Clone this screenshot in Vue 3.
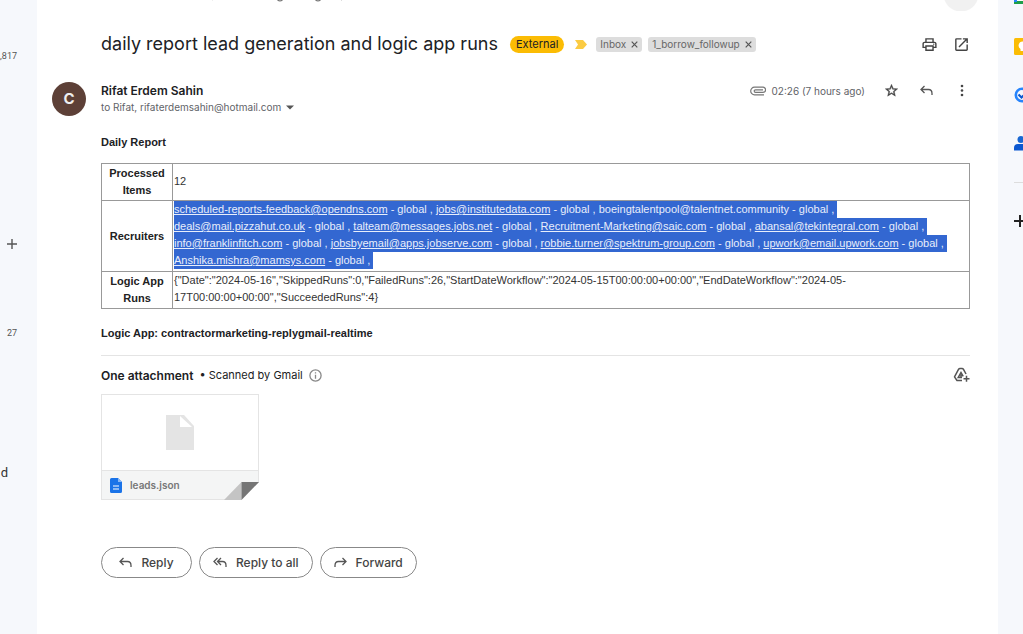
<script setup>
const labels = ['Inbox', '1_borrow_followup']

const recruiterLines = [
  [
    { address: 'scheduled-reports-feedback@opendns.com', link: true },
    { address: 'jobs@institutedata.com', link: true },
    { address: 'boeingtalentpool@talentnet.community', link: false },
  ],
  [
    { address: 'deals@mail.pizzahut.co.uk', link: true },
    { address: 'talteam@messages.jobs.net', link: true },
    { address: 'Recruitment-Marketing@saic.com', link: true },
    { address: 'abansal@tekintegral.com', link: true },
  ],
  [
    { address: 'info@franklinfitch.com', link: true },
    { address: 'jobsbyemail@apps.jobserve.com', link: true },
    { address: 'robbie.turner@spektrum-group.com', link: true },
    { address: 'upwork@email.upwork.com', link: true },
  ],
  [{ address: 'Anshika.mishra@mamsys.com', link: true }],
]
</script>

<template>
  <div class="shell">
    <aside class="rail-left">
      <span class="count first">,817</span>
      <button class="add" aria-label="Create label">
        <svg width="12" height="12" viewBox="0 0 12 12"><path d="M6 1v10M1 6h10" stroke="#555" stroke-width="1.4" /></svg>
      </button>
      <span class="count second">27</span>
      <span class="tail">d</span>
    </aside>

    <main class="mail">
      <div class="toolbar">
        <svg class="remnant" width="132" height="3" viewBox="0 0 132 3" fill="none" stroke="#777">
          <path d="M0 0v1M129.500 0v1" stroke="#ddd" />
          <path d="M65.500 0q2.500 1.600 5 0M103.500 0q2.500 1.600 5 0" stroke-width="1.200" />
        </svg>
        <span class="round"></span>
      </div>

      <header class="subject">
        <h1>daily report lead generation and logic app runs</h1>
        <span class="external">External</span>
        <svg class="important" width="12" height="9" viewBox="0 0 12 9"><path d="M0 0h8l4 4.500L8 9H0l3-4.500z" fill="#fbcb43" /></svg>
        <ul class="labels">
          <li v-for="label in labels" :key="label">
            {{ label }}
            <button :aria-label="'Remove label ' + label">
              <svg width="7" height="7" viewBox="0 0 7 7"><path d="M.7.7l5.600 5.600M6.300.7L.7 6.300" stroke="#555" stroke-width="1.200" /></svg>
            </button>
          </li>
        </ul>
        <div class="tools">
          <button aria-label="Print all">
            <svg width="17" height="17" viewBox="0 0 24 24" fill="#444"><path d="M19 8h-1V3H6v5H5c-1.660 0-3 1.340-3 3v6h4v4h12v-4h4v-6c0-1.660-1.340-3-3-3zM8 5h8v3H8V5zm8 14H8v-4h8v4zm2-4v-2H6v2H4v-4c0-.55.45-1 1-1h14c.55 0 1 .45 1 1v4h-2z" /><circle cx="18" cy="11.500" r="1" /></svg>
          </button>
          <button aria-label="Open in new window">
            <svg width="17" height="17" viewBox="0 0 24 24" fill="#444"><path d="M19 19H5V5h7V3H5a2 2 0 0 0-2 2v14a2 2 0 0 0 2 2h14c1.100 0 2-.9 2-2v-7h-2v7zM14 3v2h3.590l-9.830 9.830 1.410 1.410L19 6.410V10h2V3h-7z" /></svg>
          </button>
        </div>
      </header>

      <section class="sender">
        <span class="avatar">C</span>
        <div class="who">
          <strong>Rifat Erdem Sahin</strong>
          <p>to Rifat, rifaterdemsahin@hotmail.com
            <button aria-label="Show details"><svg width="8" height="5" viewBox="0 0 8 5"><path d="M0 .5h8L4 4.500z" fill="#555" /></svg></button>
          </p>
        </div>
        <div class="meta">
          <svg class="clip" width="16" height="10" viewBox="0 0 16 10" fill="none" stroke="#777" stroke-width="1.200"><path d="M14 8.800H4.500a3.800 3.800 0 0 1 0-7.600H13a2.600 2.600 0 0 1 0 5.200H5.500a1.300 1.300 0 0 1 0-2.600H13" /></svg>
          <span>02:26 (7 hours ago)</span>
          <button class="star" aria-label="Star">
            <svg width="15" height="15" viewBox="0 0 24 24" fill="#444" stroke="#444" stroke-width=".6"><path d="M22 9.240l-7.190-.62L12 2 9.190 8.630 2 9.240l5.460 4.730L5.820 21 12 17.270 18.180 21l-1.630-7.030L22 9.240zM12 15.400l-3.760 2.270 1-4.280-3.320-2.880 4.380-.38L12 6.100l1.710 4.040 4.380.38-3.320 2.880 1 4.280L12 15.400z" /></svg>
          </button>
          <button class="back" aria-label="Reply">
            <svg width="13" height="11" viewBox="0 0 13 11" fill="none" stroke="#555" stroke-width="1.300"><path d="M4.500 1L1 4.500 4.500 8M1 4.500h7.500q3.500 0 3.500 4V10" /></svg>
          </button>
          <button class="more" aria-label="More">
            <svg width="4" height="13" viewBox="0 0 4 13" fill="#444"><circle cx="2" cy="2" r="1.300" /><circle cx="2" cy="6.500" r="1.300" /><circle cx="2" cy="11" r="1.300" /></svg>
          </button>
        </div>
      </section>

      <article class="body">
        <h2>Daily Report</h2>
        <table>
          <tbody>
            <tr>
              <th scope="row">Processed Items</th>
              <td>12</td>
            </tr>
            <tr>
              <th scope="row">Recruiters</th>
              <td>
                <div v-for="(line, i) in recruiterLines" :key="i" class="line">
                  <span class="selected"><template v-for="item in line" :key="item.address"><a v-if="item.link" :href="'mailto:' + item.address">{{ item.address }}</a><template v-else>{{ item.address }}</template>{{ ' - global , ' }}</template></span>
                </div>
              </td>
            </tr>
            <tr>
              <th scope="row">Logic App Runs</th>
              <td>{"Date":"2024-05-16","SkippedRuns":0,"FailedRuns":26,"StartDateWorkflow":"2024-05-15T00:00:00+00:00","EndDateWorkflow":"2024-05-<br>17T00:00:00+00:00","SucceededRuns":4}</td>
            </tr>
          </tbody>
        </table>
        <h2>Logic App: contractormarketing-replygmail-realtime</h2>
      </article>

      <section class="attachments">
        <div class="summary">
          <strong>One attachment</strong>
          <span class="scan">•&nbsp;Scanned by Gmail</span>
          <svg width="13" height="13" viewBox="0 0 13 13" fill="none" stroke="#888"><circle cx="6.500" cy="6.500" r="5.600" stroke-width="1.300" /><path d="M6.500 5.700v4M6.500 3.300v1.300" stroke-width="1.300" /></svg>
          <button class="drive" aria-label="Add to Drive">
            <svg width="17" height="16" viewBox="0 0 17 16" fill="none" stroke="#555" stroke-width="1.500"><path d="M9 13.500H4L1.500 9.800 5.500 2.300Q6 1.500 7 1.500h2q1 0 1.500.8L13 7" stroke-linejoin="round" /><path d="M9 10.500H5.200L8 5.500l2.200 3.900M8 7.500v3M13.500 8.800v6M10.500 11.800h6" /></svg>
          </button>
        </div>
        <a class="file" href="#leads">
          <span class="preview">
            <svg width="28" height="35" viewBox="0 0 28 35"><path d="M0 0h18l10 11v24H0z" fill="#e4e4e4" /><path d="M14 1v11h12z" fill="#fff" /></svg>
          </span>
          <span class="caption">
            <svg width="12" height="15" viewBox="0 0 12 15"><path d="M1.500 0H8l4 4v9.500a1.500 1.500 0 0 1-1.500 1.500h-9A1.500 1.500 0 0 1 0 13.500v-12A1.500 1.500 0 0 1 1.500 0z" fill="#1a73e8" /><path d="M3 8h6M3 11h6" stroke="#fff" stroke-width="1.200" /><path d="M8 0v4h4" fill="#8ab8f5" /></svg>
            leads.json
          </span>
          <svg class="fold" width="35" height="18" viewBox="0 0 35 18"><path d="M35 0v18H17z" fill="#fff" /><path d="M0 18L17.500 0v18z" fill="#c4c4c4" /><path d="M17.500 0H35L17.500 18z" fill="#757575" /></svg>
        </a>
      </section>

      <footer class="actions">
        <button>
          <svg width="13" height="11" viewBox="0 0 13 11" fill="none" stroke="#555" stroke-width="1.300"><path d="M4.500 1L1 4.500 4.500 8M1 4.500h7.500q3.500 0 3.500 4V10" /></svg>
          Reply
        </button>
        <button>
          <svg width="14" height="11" viewBox="0 0 14 11" fill="none" stroke="#555" stroke-width="1.300"><path d="M4.500 1L1 4.500 4.500 8M8 1L4.500 4.500 8 8M4.500 4.500h5q3.500 0 3.500 4V10" /></svg>
          Reply to all
        </button>
        <button>
          <svg width="13" height="11" viewBox="0 0 13 11" fill="none" stroke="#555" stroke-width="1.300"><path d="M8.500 1L12 4.500 8.500 8M12 4.500H4.500Q1 4.500 1 8.500V10" /></svg>
          Forward
        </button>
      </footer>
    </main>

    <aside class="rail-right">
      <svg class="app" width="18" height="4" viewBox="0 0 18 4"><path d="M0 0h18v4H0z" fill="#1e9e4a" /><path d="M0 0h3v2H0z" fill="#2684fc" /><path d="M3 0h15v1H3z" fill="#fff" /></svg>
      <svg class="app keep" width="17" height="17" viewBox="0 0 17 17"><rect width="17" height="17" rx="1.500" fill="#fbbc04" /><path d="M8.500 3.500a4 4 0 0 0-2 7.400V13h4v-2.100a4 4 0 0 0-2-7.400z" fill="#fff" /></svg>
      <svg class="app tasks" width="16" height="16" viewBox="0 0 16 16" fill="none"><circle cx="8" cy="8" r="6.200" stroke="#2684fc" stroke-width="2.600" /><path d="M4.500 7.500l3 3 6-6" stroke="#0b57d0" stroke-width="2.200" /></svg>
      <svg class="app people" width="16" height="15" viewBox="0 0 16 15" fill="#0b57d0"><circle cx="7" cy="3.500" r="3.500" fill="#1967d2" /><path d="M0 14.500V12a4 4 0 0 1 4-4h8v6.500z" /></svg>
      <hr>
      <button class="app" aria-label="Get add-ons"><svg width="12" height="12" viewBox="0 0 12 12"><path d="M6 0v12M0 6h12" stroke="#222" stroke-width="2" /></svg></button>
    </aside>
  </div>
</template>

<style>
body {
  background: #fff;
}
</style>

<style scoped>
.shell {
  display: grid;
  grid-template-columns: 37px minmax(0, 1fr) 25px;
  min-height: 100vh;
  overflow: hidden;
  background: #f6f8fc;
  color: #202124;
  font-family: Inter, Roboto, sans-serif;
}
button {
  display: inline-flex;
  align-items: center;
  justify-content: center;
  padding: 0;
  border: 0;
  background: none;
  color: inherit;
  font: inherit;
}
svg {
  flex: none;
  display: block;
}
h1, h2, p, ul {
  margin: 0;
  padding: 0;
}
.rail-left {
  display: flex;
  flex-direction: column;
  align-items: flex-end;
  padding: 48px 19px 0 0;
  font-family: Roboto, sans-serif;
  font-size: 9px;
  line-height: 16px;
  color: #555;
}
.add {
  margin-top: 174px;
}
.second {
  margin-top: 75px;
}
.count {
  margin-right: 1px;
}
.tail {
  margin: 124px 10px 0 0;
  font-size: 13px;
  color: #333;
}
.mail {
  display: flex;
  flex-direction: column;
  padding: 0 28px 0 64px;
  background: #fff;
}
.toolbar {
  display: flex;
  justify-content: space-between;
  align-items: flex-end;
  height: 11px;
  margin-left: 111px;
}
.remnant {
  align-self: flex-start;
}
.round {
  width: 34px;
  height: 11px;
  margin-right: -8px;
  background: radial-gradient(circle at 17px -6px, #f1f1f1 17px, transparent 18px);
}
.subject {
  display: flex;
  align-items: center;
  height: 32px;
  margin-top: 17px;
}
h1 {
  font-size: 18px;
  font-weight: 400;
  line-height: 24px;
  white-space: nowrap;
}
.external {
  margin-left: 12px;
  padding: 0 6px;
  border-radius: 9px;
  background: #fbbc04;
  font-size: 11px;
  line-height: 17px;
}
.important {
  margin-left: 11px;
}
.labels {
  display: flex;
  gap: 6px;
  margin-left: 9px;
  list-style: none;
}
.labels li {
  display: flex;
  align-items: center;
  gap: 5px;
  padding: 0 4px;
  border-radius: 3px;
  background: #ddd;
  color: #666;
  font-size: 10px;
  line-height: 15px;
}
.tools {
  display: flex;
  gap: 15px;
  margin-left: auto;
}
.sender {
  display: flex;
  margin: 22px 0 0 -49px;
}
.avatar {
  width: 34px;
  height: 34px;
  border-radius: 50%;
  background: #5d4037;
  color: #eee;
  font-size: 15px;
  font-weight: 700;
  line-height: 34px;
  text-align: center;
}
.who {
  margin-left: 15px;
  font-size: 12px;
  line-height: 17px;
}
.who strong {
  display: block;
  font-weight: 600;
}
.who p {
  display: flex;
  align-items: center;
  gap: 5px;
  font-size: 10px;
  color: #5f6368;
}
.meta {
  display: flex;
  align-items: center;
  height: 17px;
  margin-left: auto;
  font-size: 10px;
  color: #5f6368;
}
.clip {
  margin-right: 6px;
}
.star {
  margin-left: 19px;
}
.back {
  margin-left: 21px;
}
.more {
  margin: 0 6px 0 27px;
}
.body {
  margin-top: 18px;
  font-family: "Liberation Sans", Arial, sans-serif;
  font-size: 11px;
  line-height: 17px;
}
h2 {
  font-size: 11px;
  line-height: 17px;
}
table {
  width: 100%;
  margin: 12px 0 16px;
  border-collapse: collapse;
  color: #333;
}
th, td {
  padding: 1px;
  border: 1px solid #999;
  text-align: left;
}
td {
  padding: 0 1px 2px;
}
th {
  width: 68px;
  text-align: center;
  color: #222;
}
.line {
  white-space: nowrap;
}
.selected {
  display: inline-block;
  background: #3367d1;
  color: #e8eefb;
  white-space: pre;
}
.selected a {
  color: inherit;
}
.attachments {
  margin-top: 13px;
  border-top: 1px solid #e4e4e4;
}
.summary {
  display: flex;
  align-items: center;
  gap: 6px;
  height: 38px;
  font-size: 12px;
}
.summary strong {
  font-weight: 600;
}
.scan {
  font-size: 11px;
}
.drive {
  margin-left: auto;
}
.file {
  position: relative;
  display: flex;
  flex-direction: column;
  width: 156px;
  border: 1px solid #e4e4e4;
  color: #777;
  font-size: 10px;
  font-weight: 600;
  text-decoration: none;
}
.preview {
  display: flex;
  align-items: center;
  justify-content: center;
  height: 75px;
}
.caption {
  display: flex;
  align-items: center;
  gap: 8px;
  height: 28px;
  padding-left: 8px;
  border-top: 1px solid #e4e4e4;
  background: #f4f5f5;
}
.fold {
  position: absolute;
  right: -1px;
  bottom: -1px;
}
.actions {
  display: flex;
  gap: 7px;
  margin-top: 47px;
}
.actions button {
  gap: 9px;
  min-width: 91px;
  height: 31px;
  padding: 0 13px;
  border: 1px solid #888;
  border-radius: 16px;
  color: #444;
  font-size: 12px;
  font-weight: 500;
}
.rail-right {
  display: flex;
  flex-direction: column;
  align-items: flex-start;
  padding-left: 16px;
  overflow: hidden;
}
.keep {
  margin-top: 34px;
}
.tasks {
  margin-top: 32px;
}
.people {
  margin-top: 33px;
}
hr {
  width: 20px;
  height: 1px;
  margin: 31px 0 32px;
  border: 0;
  background: #ddd;
}
</style>
